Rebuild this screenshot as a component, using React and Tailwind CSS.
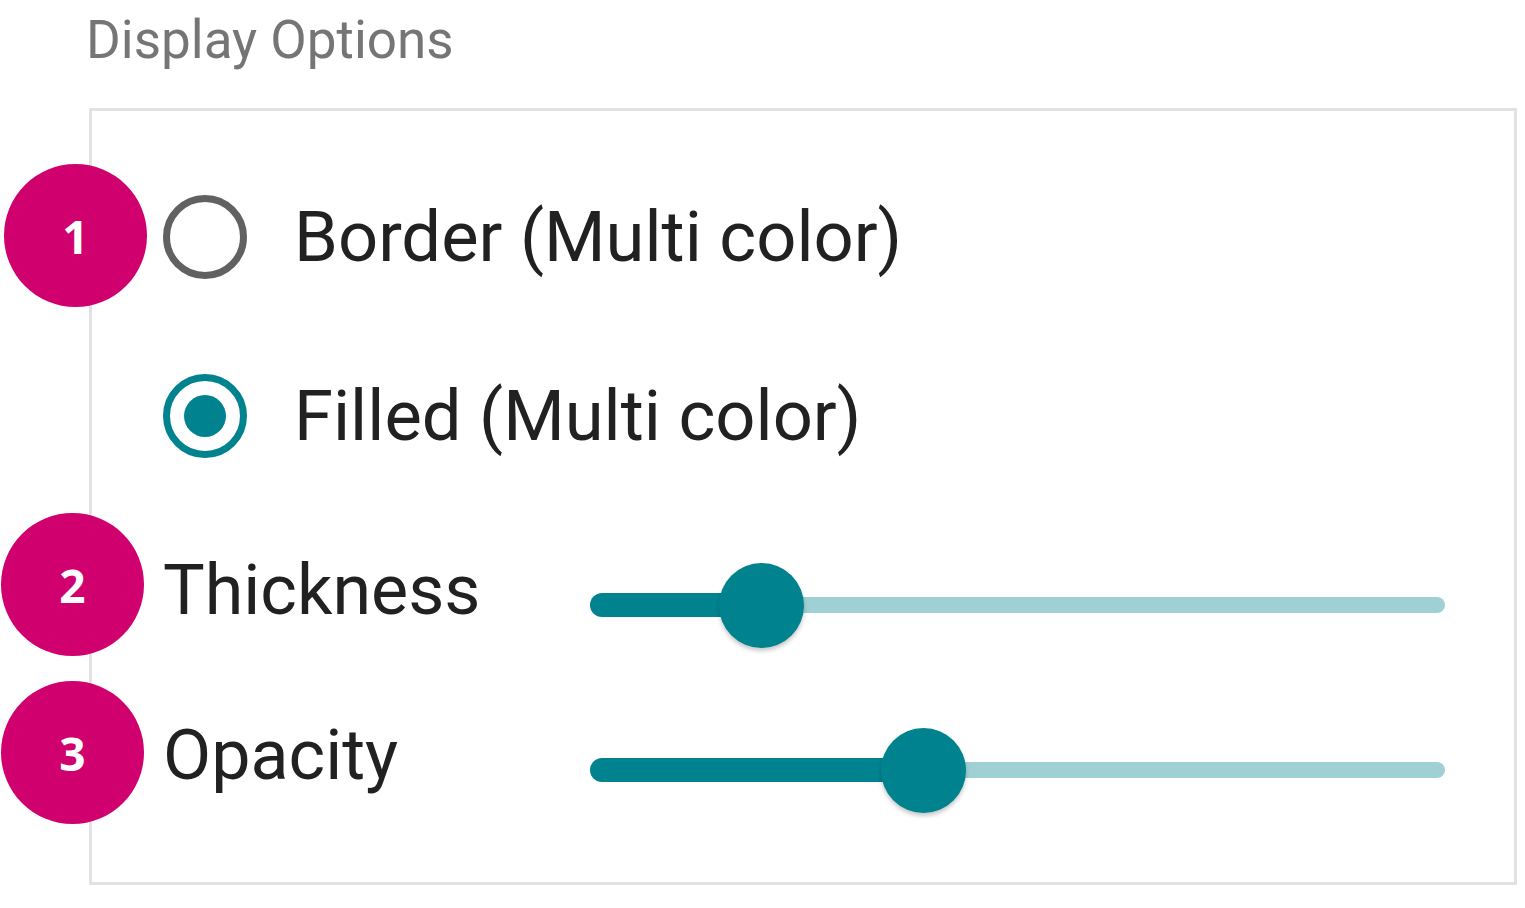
import React from "react";

const Badge = ({ n, className }) => (
  <div
    className={
      "absolute w-[143px] h-[143px] rounded-full bg-[#d0006f] flex items-center justify-center text-white font-bold text-[46px] leading-none " +
      className
    }
    style={{ fontFamily: '"Open Sans", "Liberation Sans", sans-serif' }}
  >
    {n}
  </div>
);

const Radio = ({ checked, label }) => (
  <div className="flex items-center h-[100px]">
    {checked ? (
      <div className="w-[84px] h-[84px] rounded-full border-[7px] border-[#00838f] flex items-center justify-center shrink-0">
        <div className="w-[42px] h-[42px] rounded-full bg-[#00838f]" />
      </div>
    ) : (
      <div className="w-[84px] h-[84px] rounded-full border-[7px] border-[#616161] shrink-0" />
    )}
    <span className="ml-[47px] text-[70.5px] leading-none text-[#212121]">{label}</span>
  </div>
);

const SliderRow = ({ label, value }) => (
  <div className="flex items-center h-[100px]">
    <span className="w-[427px] shrink-0 pb-[30px] text-[70px] leading-none text-[#212121]">
      {label}
    </span>
    <div className="relative w-[855px] h-[86px] flex items-center">
      <div className="absolute left-0 right-0 h-[16px] rounded-full bg-[#9ed0d4]" />
      <div
        className="absolute left-0 h-[24px] rounded-full bg-[#00838f]"
        style={{ width: `${value}%` }}
      />
      <div
        className="absolute w-[85px] h-[85px] rounded-full bg-[#00838f] shadow-[0_3px_4px_rgba(0,0,0,0.22)]"
        style={{ left: `calc(${value}% - 42px)` }}
      />
    </div>
  </div>
);

export default function App() {
  return (
    <div
      className="relative w-[1525px] h-[908px] bg-white overflow-hidden"
      style={{ fontFamily: 'Roboto, "Liberation Sans", sans-serif' }}
    >
      <div className="pt-[14px] pl-[86px] text-[53px] leading-none text-[#757575]">
        Display Options
      </div>
      <div className="mt-[41px] ml-[89px] w-[1428px] h-[777px] border-[3px] border-[#e2e2e2] pt-[76px] pl-[71px]">
        <Radio label="Border (Multi color)" />
        <div className="mt-[79px]">
          <Radio checked label="Filled (Multi color)" />
        </div>
        <div className="mt-[89px]">
          <SliderRow label="Thickness" value={20} />
        </div>
        <div className="mt-[65px]">
          <SliderRow label="Opacity" value={39} />
        </div>
      </div>
      <Badge n="1" className="left-[4px] top-[164px]" />
      <Badge n="2" className="left-[1px] top-[513px]" />
      <Badge n="3" className="left-[1px] top-[681px]" />
    </div>
  );
}
